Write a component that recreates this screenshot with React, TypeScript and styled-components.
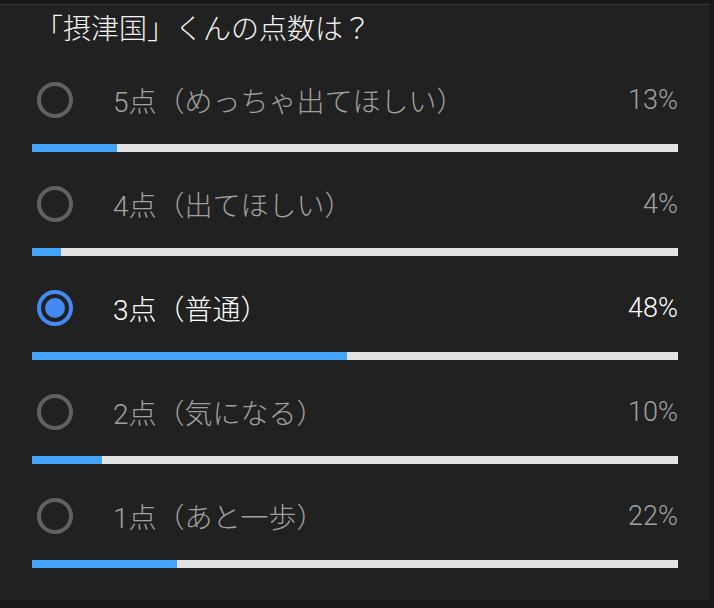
import React from "react";
import styled, { createGlobalStyle } from "styled-components";

const Global = createGlobalStyle`
  html, body { margin: 0; padding: 0; background: #191919; }
  body { font-family: Roboto, "Noto Sans CJK JP", sans-serif; }
  #root { min-height: 608px; }
`;

const Card = styled.div`
  box-sizing: border-box;
  margin-top: 4px;
  width: 710px;
  height: 596px;
  background: #212121;
  border-top: 1px solid #3a3a3a;
  padding: 0 32px 30px 32px;
`;

const Title = styled.div`
  height: 45px;
  padding-top: 5px;
  box-sizing: border-box;
  line-height: 40px;
  font-size: 28px;
  font-weight: 300;
  color: #f4f4f4;
  padding-left: 3px;
`;

const Row = styled.div`
  height: 104px;
  box-sizing: border-box;
  padding-top: 22px;
  display: flex;
  flex-direction: column;
`;

const OptionLine = styled.div`
  height: 56px;
  display: flex;
  align-items: center;
  padding-left: 5px;
  margin-bottom: 1px;
`;

const Radio = styled.div<{ $on: boolean }>`
  box-sizing: border-box;
  width: 36px;
  height: 36px;
  border-radius: 50%;
  border: 4px solid ${(p) => (p.$on ? "#4489f4" : "#616161")};
  display: flex;
  align-items: center;
  justify-content: center;
  flex-shrink: 0;
`;

const Dot = styled.div`
  width: 20px;
  height: 20px;
  border-radius: 50%;
  background: #4489f4;
`;

const Label = styled.div<{ $on: boolean }>`
  margin-left: 40px;
  flex: 1;
  font-size: 28px;
  font-weight: 300;
  color: ${(p) => (p.$on ? "#ffffff" : "#a0a0a0")};
`;

const Percent = styled.div<{ $on: boolean }>`
  font-size: 27px;
  font-weight: 300;
  color: ${(p) => (p.$on ? "#ffffff" : "#a0a0a0")};
`;

const Track = styled.div`
  margin-top: 15px;
  height: 8px;
  background: #e3e3e3;
  display: flex;
`;

const Fill = styled.div`
  height: 100%;
  background: #42a5fa;
`;

const options = [
  { label: "5点（めっちゃ出てほしい）", pct: 13, w: 13.2 },
  { label: "4点（出てほしい）", pct: 4, w: 4.5 },
  { label: "3点（普通）", pct: 48, w: 48.8 },
  { label: "2点（気になる）", pct: 10, w: 10.8 },
  { label: "1点（あと一歩）", pct: 22, w: 22.5 },
];

export default function App() {
  const selected = 2;
  return (
    <>
      <Global />
      <Card>
        <Title>「摂津国」くんの点数は？</Title>
        {options.map((o, i) => {
          const on = i === selected;
          return (
            <Row key={o.label}>
              <OptionLine>
                <Radio $on={on}>{on && <Dot />}</Radio>
                <Label $on={on}>{o.label}</Label>
                <Percent $on={on}>{o.pct}%</Percent>
              </OptionLine>
              <Track>
                <Fill style={{ width: `${o.w}%` }} />
              </Track>
            </Row>
          );
        })}
      </Card>
    </>
  );
}
